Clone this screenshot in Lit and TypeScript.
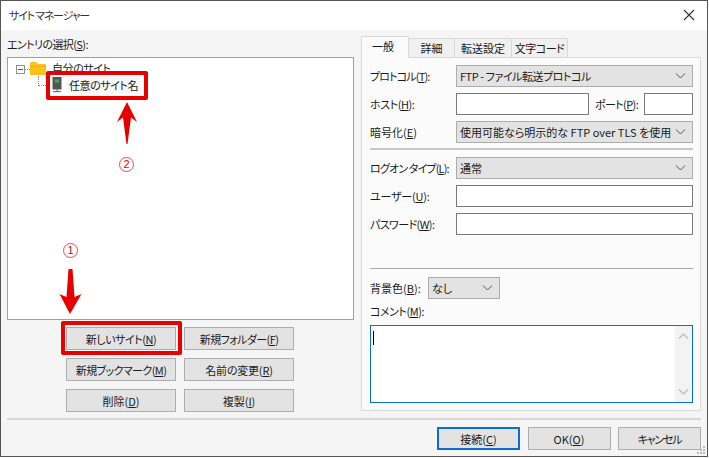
import { LitElement, html, css } from "lit";
import { customElement } from "lit/decorators.js";

const chevron = html`<svg class="chev" width="11" height="6" viewBox="0 0 11 6"><path d="M1 .5 5.5 5 10 .5" fill="none" stroke="#555" stroke-width="1"/></svg>`;

@customElement("app-root")
export class AppRoot extends LitElement {
  static styles = css`
    :host {
      display: block;
      width: 709px;
      height: 458px;
      position: relative;
      overflow: hidden;
      background: #fff;
      font-family: "Noto Sans CJK JP", "Liberation Sans", sans-serif;
      font-size: 11px;
      font-feature-settings: "palt";
      color: #1a1a1a;
      line-height: 16px;
    }
    * { box-sizing: border-box; }
    u { text-underline-offset: 1px; }
    .s2 { letter-spacing: -0.2px; }
    .s4 { letter-spacing: -0.45px; }
    .s6 { letter-spacing: -0.6px; }
    .s9 { letter-spacing: -0.85px; }
    .s12 { letter-spacing: -1.2px; }
    .win {
      position: absolute;
      inset: 0 1px 1px 0;
      border: 1px solid #555;
      background: #f5f5f5;
      display: flex;
      flex-direction: column;
    }
    .title {
      height: 29px;
      flex: none;
      background: #fff;
      display: flex;
      align-items: center;
      justify-content: space-between;
      padding: 0 12px 2px 8px;
      color: #333;
    }
    .main {
      flex: none;
      height: 388px;
      display: flex;
      padding: 6px 0 0 6px;
      gap: 7px;
    }
    .left { width: 347px; display: flex; flex-direction: column; }
    .lbl { height: 21px; flex: none; line-height: 14px; padding-top: 1px; }
    .tree {
      flex: none;
      height: 263px;
      background: #fff;
      border: 1px solid #a0a0a0;
      padding: 2px 0 0 8px;
    }
    .node { display: flex; align-items: center; height: 16px; }
    .box {
      width: 9px; height: 9px; border: 1px solid #919191; background: #fff;
      display: flex; align-items: center; justify-content: center; flex: none;
      margin-top: 3px;
    }
    .box i { display: block; width: 5px; height: 1px; background: #3a5a9a; }
    .dots { width: 5px; border-top: 1px dotted #888; flex: none; margin-top: 3px; }
    .folder { margin-right: 6px; flex: none; }
    .child { height: 18px; padding-left: 22px; }
    .vline { width: 12px; height: 10px; border-left: 1px dotted #888; border-bottom: 1px dotted #888; align-self: flex-start; flex: none; }
    .server { margin: 0 5px 0 2px; flex: none; }
    .childname { padding: 0 2px; background: #f7f7f7; }
    .btns {
      display: grid;
      grid-template-columns: 110px 110px;
      grid-auto-rows: 23px;
      gap: 8px;
      padding: 7px 0 0 59px;
    }
    .btn {
      border: 1px solid #adadad;
      background-color: #e3e3e3;
      background-image: repeating-conic-gradient(#dedede 0 25%, #e8e8e8 0 50%);
      background-size: 2px 2px;
      display: flex;
      align-items: center;
      justify-content: center;
      white-space: nowrap;
    }
    .right { width: 340px; display: flex; flex-direction: column; }
    .tabs { display: flex; height: 21px; flex: none; align-items: flex-end; }
    .tab {
      height: 19px;
      border: 1px solid #d9d9d9;
      border-bottom: none;
      border-left: none;
      background: #f0f0f0;
      display: flex;
      align-items: center;
      justify-content: center;
      white-space: nowrap;
    }
    .tab.on {
      height: 22px;
      background: #fbfbfb;
      border-left: 1px solid #d9d9d9;
      margin-bottom: -1px;
      position: relative;
      z-index: 1;
      padding-bottom: 3px;
      padding-right: 4px;
    }
    .t1 { width: 48px; }
    .t2 { width: 46px; }
    .t3 { width: 57px; }
    .t4 { width: 56px; }
    .panel {
      flex: none;
      height: 354px;
      background: #fbfbfb;
      border: 1px solid #d9d9d9;
      padding: 7px 7px 0 8px;
      display: flex;
      flex-direction: column;
    }
    .row { display: flex; align-items: center; height: 22px; flex: none; }
    .row > label { width: 86px; flex: none; white-space: nowrap; }
    .row > label.short { width: 58px; }
    .sel {
      flex: 1;
      min-width: 0;
      height: 100%;
      border: 1px solid #adadad;
      background-color: #e3e3e3;
      background-image: repeating-conic-gradient(#dedede 0 25%, #e8e8e8 0 50%);
      background-size: 2px 2px;
      display: flex;
      align-items: center;
      justify-content: space-between;
      padding: 0 6px 0 3px;
      white-space: nowrap;
    }
    .inp { height: 100%; background: #fff; border: 1px solid #7a7a7a; flex: 1; }
    .gap6 { margin-top: 6px; }
    .gap7 { margin-top: 7px; }
    .gap8 { margin-top: 8px; }
    .port { width: 49px; flex: none; }
    .portl { margin: 0 5px 0 6px; white-space: nowrap; width: 44px; flex: none; letter-spacing: -0.6px; }
    .host { flex: none; width: 133px; }
    .sep { height: 1px; background: #a8a8a8; flex: none; margin-top: 33px; }
    .sep.top { background: #c8c8c8; height: 2px; margin-top: 5px; }
    .colorsel { flex: none; width: 72px; }
    .cmt { margin-top: 4px; height: 16px; }
    .ta {
      flex: none;
      height: 78px;
      margin-top: 6px;
      border: 1px solid #0a6fd0;
      background: #fff;
      display: flex;
      justify-content: space-between;
      padding: 5px 0 0 2px;
    }
    .caret { width: 1px; height: 14px; background: #000; }
    .sb {
      width: 17px; height: 76px; margin-top: -5px;
      background: #f3f3f3;
      display: flex; flex-direction: column; justify-content: space-between; align-items: center;
      padding: 7px 0;
    }
    .rule { height: 2px; background: #d6d6d6; flex: none; margin: 0 6px; }
    .foot {
      flex: 1;
      display: flex;
      justify-content: flex-end;
      gap: 7.5px;
      padding: 7px 6px 0 0;
    }
    .foot .btn { width: 83px; height: 23px; }
    .foot .def { border: 2px solid #0a6fd0; }
    .anno { position: absolute; }
    .rbox { border: 4px solid #e60000; border-radius: 2px; }
    .r1 { left: 46px; top: 71px; width: 102px; height: 29px; }
    .r2 { left: 61px; top: 321px; width: 121px; height: 34px; }
    .up { left: 115px; top: 100px; }
    .down { left: 58px; top: 268px; }
    .grip { right: 3px; bottom: 3px; }
    .num {
      position: absolute;
      width: 15px; height: 15px;
      border: 1px solid #ee4a4a;
      border-radius: 50%;
      color: #e60000;
      font: 11px/13px "Liberation Sans", sans-serif;
      text-align: center;
    }
    .n1 { left: 63px; top: 243px; }
    .n2 { left: 119px; top: 157px; }
  `;

  render() {
    return html`
      <div class="win">
        <div class="title">
          <span class="s12">サイト マネージャー</span>
          <svg width="12" height="12" viewBox="0 0 12 12"><path d="M1 1l10 10M11 1 1 11" stroke="#333" stroke-width="1.1" fill="none"/></svg>
        </div>
        <div class="main">
          <div class="left">
            <div class="lbl s6">エントリの選択(<u>S</u>):</div>
            <div class="tree">
              <div class="node">
                <span class="box"><i></i></span><span class="dots"></span>
                <svg class="folder" width="16" height="13" viewBox="0 0 16 13"><path d="M0 1.5C0 .7.6 0 1.400 0H6l2 2h6.500c.8 0 1.500.7 1.500 1.500V13H0z" fill="#fcc21b"/><path d="M0 4h16v1H0z" fill="#f2ae14"/></svg>
                <span class="s4">自分のサイト</span>
              </div>
              <div class="node child">
                <span class="vline"></span>
                <svg class="server" width="10" height="16" viewBox="0 0 10 16"><rect x="0.500" width="9" height="12.500" fill="#555"/><rect x="3" y="2.500" width="4" height="3" fill="#3fae5a"/><path d="M4.500 12h1v2h-1z" fill="#666"/><path d="M1 14h8v1.200H1z" fill="#2f7fd0"/></svg>
                <span class="childname s4">任意のサイト名</span>
              </div>
            </div>
            <div class="btns">
              <div class="btn s4">新しいサイト(<u>N</u>)</div>
              <div class="btn s6">新規フォルダー(<u>F</u>)</div>
              <div class="btn s6">新規ブックマーク(<u>M</u>)</div>
              <div class="btn s2">名前の変更(<u>R</u>)</div>
              <div class="btn">削除(<u>D</u>)</div>
              <div class="btn">複製(<u>I</u>)</div>
            </div>
          </div>
          <div class="right">
            <div class="tabs">
              <div class="tab on t1">一般</div>
              <div class="tab t2">詳細</div>
              <div class="tab t3">転送設定</div>
              <div class="tab t4 s4">文字コード</div>
            </div>
            <div class="panel">
              <div class="row"><label class="s9">プロトコル(<u>T</u>):</label><div class="sel"><span class="s4">FTP - ファイル転送プロトコル</span>${chevron}</div></div>
              <div class="row gap6"><label class="s4">ホスト(<u>H</u>):</label><div class="inp host"></div><span class="portl">ポート(<u>P</u>):</span><div class="inp port"></div></div>
              <div class="row gap6"><label>暗号化(<u>E</u>)</label><div class="sel"><span>使用可能なら明示的な FTP over TLS を使用</span>${chevron}</div></div>
              <div class="sep top"></div>
              <div class="row gap7"><label class="s9">ログオン タイプ(<u>L</u>):</label><div class="sel">通常${chevron}</div></div>
              <div class="row gap6"><label class="s2">ユーザー(<u>U</u>):</label><div class="inp"></div></div>
              <div class="row gap6"><label class="s6">パスワード(<u>W</u>):</label><div class="inp"></div></div>
              <div class="sep"></div>
              <div class="row gap8"><label class="short">背景色(<u>B</u>):</label><div class="sel colorsel">なし${chevron}</div></div>
              <div class="row cmt"><label class="s4">コメント(<u>M</u>):</label></div>
              <div class="ta">
                <div class="caret"></div>
                <div class="sb">
                  <svg width="11" height="6" viewBox="0 0 11 6"><path d="M1 5.500 5.500 1 10 5.500" fill="none" stroke="#c4c4c4" stroke-width="1.600"/></svg>
                  <svg width="11" height="6" viewBox="0 0 11 6"><path d="M1 .5 5.500 5 10 .5" fill="none" stroke="#c4c4c4" stroke-width="1.600"/></svg>
                </div>
              </div>
            </div>
          </div>
        </div>
        <div class="rule"></div>
        <div class="foot">
          <div class="btn def">接続(<u>C</u>)</div>
          <div class="btn">OK(<u>O</u>)</div>
          <div class="btn s12">キャンセル</div>
        </div>
      </div>

      <div class="anno rbox r1"></div>
      <div class="anno rbox r2"></div>
      <svg class="anno up" width="26" height="46" viewBox="0 0 26 46"><path d="M12 2 22 22 16 17.500 12.500 44 11.500 44 8 17.500 2 22z" fill="#e60000"/></svg>
      <svg class="anno down" width="26" height="48" viewBox="0 0 26 48"><path d="M10.500 1h4l2 28 7-3-11.500 20L1.500 26l7 3z" fill="#e60000"/></svg>
      <svg class="anno grip" width="9" height="9" viewBox="0 0 9 9" fill="#bdbdbd"><rect x="6" y="0" width="2" height="2"/><rect x="3" y="3" width="2" height="2"/><rect x="6" y="3" width="2" height="2"/><rect x="0" y="6" width="2" height="2"/><rect x="3" y="6" width="2" height="2"/><rect x="6" y="6" width="2" height="2"/></svg>
      <div class="num n1">1</div>
      <div class="num n2">2</div>
    `;
  }
}
